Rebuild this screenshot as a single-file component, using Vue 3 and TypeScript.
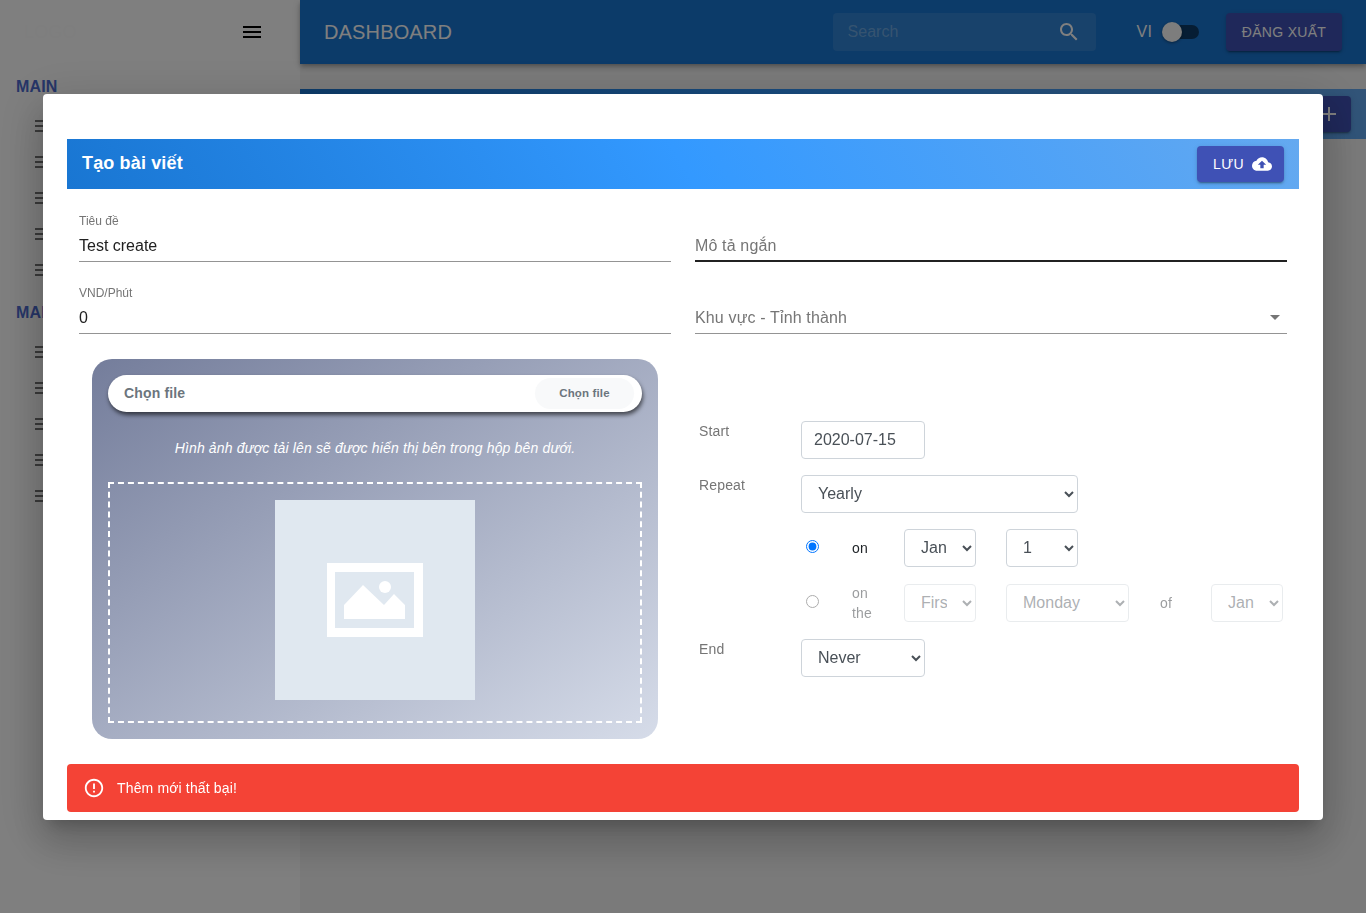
<script setup lang="ts">
const navGroups = [
  { title: 'MAIN', items: [1, 2, 3, 4, 5] },
  { title: 'MAIN', items: [6, 7, 8, 9, 10] },
]

const MENU_PATH = 'M3 18h18v-2H3v2zm0-5h18v-2H3v2zm0-7v2h18V6H3z'
const months = ['Jan', 'Feb', 'Mar', 'Apr', 'May', 'Jun', 'Jul', 'Aug', 'Sep', 'Oct', 'Nov', 'Dec']
const days = ['1', '2', '3', '4', '5', '6', '7']
const weekdays = ['Monday', 'Tuesday', 'Wednesday', 'Thursday', 'Friday', 'Saturday', 'Sunday']
</script>

<template>
  <div class="page">
    <aside class="sidebar">
      <div class="brand">
        <span class="logo">LOGO</span>
        <svg class="burger" viewBox="0 0 24 24" width="24" height="24"><path :d="MENU_PATH" /></svg>
      </div>
      <div v-for="(group, g) in navGroups" :key="g" class="nav-group">
        <div class="nav-title">{{ group.title }}</div>
        <div v-for="item in group.items" :key="item" class="nav-item">
          <svg viewBox="0 0 24 24" width="24" height="24"><path :d="MENU_PATH" /></svg>
        </div>
      </div>
    </aside>

    <main class="main">
      <header class="navbar">
        <span class="nav-heading">DASHBOARD</span>
        <div class="search">
          <input class="search-input" placeholder="Search" />
          <svg viewBox="0 0 24 24" width="24" height="24">
            <path d="M15.5 14h-.79l-.28-.27C15.41 12.59 16 11.11 16 9.5 16 5.91 13.09 3 9.5 3S3 5.91 3 9.5 5.91 16 9.5 16c1.61 0 3.09-.59 4.23-1.57l.27.28v.79l5 4.99L20.49 19l-4.99-5zm-6 0C7.01 14 5 11.99 5 9.5S7.01 5 9.5 5 14 7.01 14 9.5 11.99 14 9.5 14z" />
          </svg>
        </div>
        <span class="lang">VI</span>
        <span class="switch"><span class="switch-track"></span><span class="switch-thumb"></span></span>
        <button class="btn logout">ĐĂNG XUẤT</button>
      </header>
      <div class="subheader">
        <button class="btn add">
          <svg viewBox="0 0 24 24" width="24" height="24"><path d="M19 13h-6v6h-2v-6H5v-2h6V5h2v6h6v2z" /></svg>
        </button>
      </div>
    </main>

    <div class="overlay">
      <section class="modal">
        <div class="modal-head">
          <h2 class="modal-title">Tạo bài viết</h2>
          <button class="btn save">
            LƯU
            <svg viewBox="0 0 24 24" width="24" height="24">
              <path d="M19.35 10.04C18.67 6.59 15.64 4 12 4 9.11 4 6.6 5.64 5.35 8.04 2.34 8.36 0 10.91 0 14c0 3.31 2.69 6 6 6h13c2.76 0 5-2.24 5-5 0-2.64-2.05-4.78-4.65-4.96zM14 13v4h-4v-4H7l5-5 5 5h-3z" />
            </svg>
          </button>
        </div>

        <div class="fields">
          <div class="field">
            <label class="field-label">Tiêu đề</label>
            <div class="field-value field-filled">Test create</div>
          </div>
          <div class="field field-focus">
            <div class="field-value field-empty">Mô tả ngắn</div>
          </div>
          <div class="field">
            <label class="field-label">VND/Phút</label>
            <div class="field-value field-filled">0</div>
          </div>
          <div class="field">
            <div class="field-value field-empty">Khu vực - Tỉnh thành</div>
            <svg class="field-arrow" viewBox="0 0 24 24" width="24" height="24"><path d="M7 10l5 5 5-5z" /></svg>
          </div>
        </div>

        <div class="content">
          <div class="upload-col">
            <div class="upload-card">
              <div class="file-pill">
                <span class="file-name">Chọn file</span>
                <span class="file-btn">Chọn file</span>
              </div>
              <p class="upload-hint">Hình ảnh được tải lên sẽ được hiển thị bên trong hộp bên dưới.</p>
              <div class="drop-box">
                <div class="preview">
                  <svg viewBox="0 0 96 74" width="96" height="74">
                    <path fill="#fff" fill-rule="evenodd" d="M0 0H96V74H0ZM8 9V65H87V9Z" />
                    <path fill="#fff" d="M17 42L36 22L57 42L67 31L78 42V56H17Z" />
                    <circle fill="#fff" cx="58" cy="24" r="6" />
                  </svg>
                </div>
              </div>
            </div>
          </div>

          <div class="rrule">
            <div class="rrule-row">
              <span class="rrule-label">Start</span>
              <input class="control w-124" value="2020-07-15" />
            </div>
            <div class="rrule-row">
              <span class="rrule-label">Repeat</span>
              <select class="control w-277"><option>Yearly</option><option>Monthly</option></select>
            </div>
            <div class="rrule-on">
              <input type="radio" name="mode" checked />
              <span class="on-label">on</span>
              <select class="control w-72"><option v-for="m in months" :key="m">{{ m }}</option></select>
              <select class="control w-72"><option v-for="d in days" :key="d">{{ d }}</option></select>
            </div>
            <div class="rrule-on is-disabled">
              <input class="radio-off" type="radio" name="mode" />
              <span class="on-label">on the</span>
              <select class="control w-72" disabled><option>First</option></select>
              <select class="control w-123" disabled><option v-for="w in weekdays" :key="w">{{ w }}</option></select>
              <span class="on-label">of</span>
              <select class="control w-72" disabled><option>Jan</option></select>
            </div>
            <div class="rrule-row">
              <span class="rrule-label">End</span>
              <select class="control w-124"><option>Never</option><option>After</option></select>
            </div>
          </div>
        </div>

        <div class="alert">
          <svg viewBox="0 0 24 24" width="22" height="22">
            <path d="M11 15h2v2h-2zm0-8h2v6h-2zm.99-5C6.47 2 2 6.48 2 12s4.47 10 9.99 10C17.52 22 22 17.52 22 12S17.52 2 11.99 2zM12 20c-4.42 0-8-3.58-8-8s3.58-8 8-8 8 3.58 8 8-3.58 8-8 8z" />
          </svg>
          <span>Thêm mới thất bại!</span>
        </div>
      </section>
    </div>
  </div>
</template>

<style>
body {
  margin: 0;
  overflow: hidden;
}
</style>

<style scoped>
.page {
  display: flex;
  height: 913px;
  background: #f5f5f5;
  font-family: "Liberation Sans", Arial, sans-serif;
  letter-spacing: .15px;
  overflow: hidden;
}

.sidebar {
  width: 300px;
  flex: none;
  background: #fff;
}

.brand {
  display: flex;
  align-items: center;
  justify-content: space-between;
  height: 64px;
  padding: 0 36px 0 24px;
  box-sizing: border-box;
}

.logo {
  font-size: 18px;
  color: #fcfcfc;
}

.nav-group {
  padding-left: 16px;
  padding-top: 14px;
}

.nav-group + .nav-group {
  padding-top: 10px;
}

.nav-title {
  font-size: 16px;
  line-height: 18px;
  font-weight: 700;
  color: #4d6cd0;
  margin-bottom: 18px;
}

.nav-item {
  display: flex;
  height: 24px;
  margin-bottom: 12px;
  padding-left: 16px;
  fill: #757575;
}

.main {
  flex: 1;
  min-width: 0;
}

.navbar {
  display: flex;
  align-items: center;
  height: 64px;
  padding: 0 24px;
  box-sizing: border-box;
  background: #1976d2;
  color: #fff;
  box-shadow: 0 2px 4px -1px rgba(0, 0, 0, .2), 0 4px 5px rgba(0, 0, 0, .14), 0 1px 10px rgba(0, 0, 0, .12);
}

.nav-heading {
  font-size: 20px;
  margin-right: auto;
}

.search {
  display: flex;
  align-items: center;
  width: 263px;
  height: 38px;
  padding: 0 15px;
  box-sizing: border-box;
  border-radius: 4px;
  background: rgba(255, 255, 255, .1);
  fill: #fff;
}

.search-input {
  flex: 1;
  min-width: 0;
  border: 0;
  padding: 0;
  background: none;
  outline: none;
  font: 16px "Liberation Sans", Arial, sans-serif;
}

.search-input::placeholder {
  color: rgba(255, 255, 255, .3);
}

.lang {
  margin: 0 11px 0 41px;
  font-size: 16px;
}

.switch {
  position: relative;
  width: 36px;
  height: 14px;
  margin-right: 27px;
}

.switch-track {
  display: block;
  height: 100%;
  border-radius: 7px;
  background: #000;
  opacity: .5;
}

.switch-thumb {
  position: absolute;
  left: -1px;
  top: -3px;
  width: 20px;
  height: 20px;
  border-radius: 50%;
  background: #fafafa;
  box-shadow: 0 1px 3px rgba(0, 0, 0, .4);
}

.btn {
  display: inline-flex;
  align-items: center;
  justify-content: center;
  border: 0;
  border-radius: 4px;
  background: #3f51b5;
  color: #fff;
  font: 14px "Liberation Sans", Arial, sans-serif;
  letter-spacing: .4px;
  box-shadow: 0 3px 1px -2px rgba(0, 0, 0, .2), 0 2px 2px rgba(0, 0, 0, .14), 0 1px 5px rgba(0, 0, 0, .12);
}

.logout {
  width: 116px;
  height: 38px;
  letter-spacing: .3px;
}

.subheader {
  display: flex;
  justify-content: flex-end;
  align-items: center;
  height: 50px;
  margin-top: 25px;
  padding-right: 15px;
  background: linear-gradient(60deg, #1976d2, #3399ff 50%, #64a9f0);
}

.add {
  width: 87px;
  height: 36px;
  justify-content: flex-end;
  padding: 0 10px 0 0;
  fill: #fff;
}

.overlay {
  position: fixed;
  inset: 0;
  display: flex;
  align-items: center;
  justify-content: center;
  background: rgba(0, 0, 0, .5);
}

.modal {
  width: 1280px;
  padding: 45px 24px 8px;
  box-sizing: border-box;
  border-radius: 4px;
  background: #fff;
  box-shadow: 0 11px 15px -7px rgba(0, 0, 0, .2), 0 24px 38px 3px rgba(0, 0, 0, .14), 0 9px 46px 8px rgba(0, 0, 0, .12);
}

.modal-head {
  display: flex;
  align-items: center;
  justify-content: space-between;
  height: 50px;
  padding: 0 15px;
  background: linear-gradient(60deg, #1976d2, #3399ff 50%, #64a9f0);
}

.modal-title {
  margin: 0;
  font-size: 18px;
  font-weight: 700;
  color: #fff;
}

.save {
  justify-content: flex-start;
  width: 87px;
  height: 36px;
  padding: 0 0 0 16px;
  gap: 8px;
  fill: #fff;
}

.save svg {
  width: 20px;
  height: 20px;
}

.fields {
  display: grid;
  grid-template-columns: 1fr 1fr;
  column-gap: 24px;
  row-gap: 24px;
  padding: 25px 12px 0;
}

.field {
  position: relative;
  display: flex;
  flex-direction: column;
  justify-content: flex-end;
  height: 48px;
  box-sizing: border-box;
  border-bottom: 1px solid rgba(0, 0, 0, .42);
}

.field-focus {
  border-bottom: 2px solid #212121;
}

.field-label {
  font-size: 12px;
  line-height: 14px;
  margin-bottom: 2px;
  letter-spacing: 0;
  color: #757575;
}

.field-value {
  font-size: 16px;
  line-height: 19px;
  padding: 6px 0;
  color: #212121;
}

.field-filled {
  letter-spacing: 0;
}

.field-focus .field-value {
  padding-bottom: 5px;
}

.field-empty {
  color: #757575;
}

.field-arrow {
  position: absolute;
  right: 0;
  bottom: 4px;
  fill: #757575;
}

.content {
  display: grid;
  grid-template-columns: 1fr 1fr;
  column-gap: 24px;
  padding: 25px 12px 0;
}

.upload-col {
  padding: 0 13px;
}

.upload-card {
  height: 380px;
  padding: 16px;
  box-sizing: border-box;
  border-radius: 20px;
  background: linear-gradient(to bottom right, #747d9b, #d6dce9);
}

.file-pill {
  display: flex;
  align-items: center;
  justify-content: space-between;
  height: 37px;
  padding: 0 8px 0 16px;
  border-radius: 19px;
  background: #fff;
  box-shadow: 1px 3px 4px rgba(0, 0, 0, .6);
  color: #6c757d;
  font-weight: 700;
}

.file-name {
  font-size: 14px;
}

.file-btn {
  display: flex;
  align-items: center;
  justify-content: center;
  width: 99px;
  height: 31px;
  border-radius: 16px;
  background: #f8f9fa;
  font-size: 11.5px;
}

.upload-hint {
  margin: 27px 0 25px;
  font-size: 14px;
  line-height: 18px;
  font-style: italic;
  text-align: center;
  color: #fff;
}

.drop-box {
  display: flex;
  justify-content: center;
  height: 241px;
  padding-top: 16px;
  box-sizing: border-box;
  border: 2px dashed #fff;
}

.preview {
  display: flex;
  align-items: center;
  justify-content: center;
  width: 200px;
  height: 200px;
  background: #e0e8f0;
}

.rrule {
  display: flex;
  flex-direction: column;
  justify-content: center;
  gap: 16px;
  padding-left: 4px;
}

.rrule-row {
  display: flex;
  align-items: flex-start;
}

.rrule-label {
  width: 102px;
  flex: none;
  font-size: 14px;
  line-height: 20px;
  color: #757575;
}

.control {
  height: 38px;
  padding: 6px 12px;
  box-sizing: border-box;
  border: 1px solid #ced4da;
  border-radius: 4px;
  background: #fff;
  color: #495057;
  font: 16px/24px "Liberation Sans", Arial, sans-serif;
  outline: none;
}

.w-72 { width: 72px; }
.w-123 { width: 123px; }
.w-124 { width: 124px; }
.w-277 { width: 277px; }

.rrule-on {
  display: grid;
  grid-template-columns: 51px 52px 102px 154px 51px 72px;
  align-items: center;
  min-height: 38px;
  margin-left: 102px;
}

.rrule-on.is-disabled {
  min-height: 40px;
}

.rrule-on input[type="radio"] {
  width: 13px;
  height: 13px;
  margin: 0 0 3px 5px;
}

.rrule-on .radio-off {
  opacity: .6;
}

.on-label {
  font-size: 14px;
  line-height: 20px;
  width: 30px;
  color: #212529;
}

.is-disabled .control,
.is-disabled .on-label {
  opacity: .45;
}

.alert {
  display: flex;
  align-items: center;
  gap: 12px;
  height: 48px;
  margin-top: 25px;
  padding: 0 16px;
  border-radius: 4px;
  background: #f44336;
  color: #fff;
  fill: #fff;
  font-size: 14px;
}
</style>
